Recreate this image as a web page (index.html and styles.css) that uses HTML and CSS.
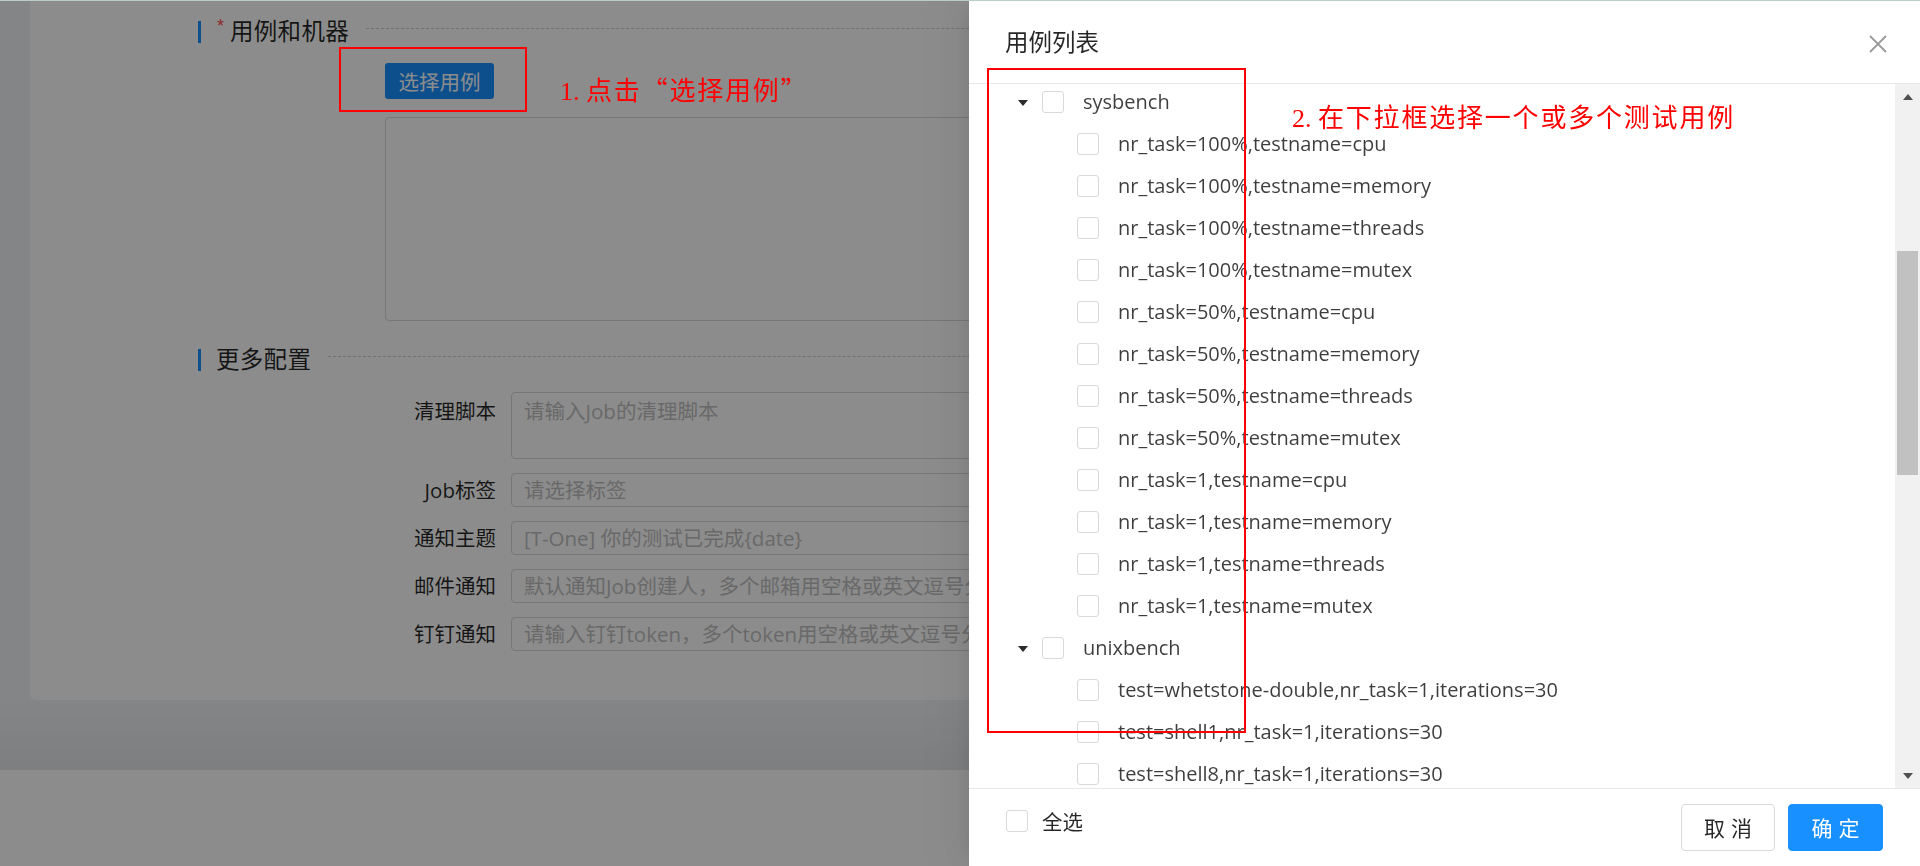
FILE: index.html
```html
<!DOCTYPE html>
<html lang="zh-CN">
<head>
<meta charset="utf-8">
<title>用例列表</title>
<link rel="stylesheet" href="styles.css">
</head>
<body>
<div class="layout">
  <div class="card">
    <section class="section">
      <div class="divider">
        <span class="bar"></span><span class="req">*</span><span class="sec-title">用例和机器</span><span class="dash"></span>
      </div>
      <div class="cases-body">
        <button class="btn-select">选择用例</button>
        <div class="case-box"></div>
      </div>
    </section>
    <section class="section section-more">
      <div class="divider">
        <span class="bar"></span><span class="sec-title sec-title-plain">更多配置</span><span class="dash"></span>
      </div>
      <div class="form">
        <div class="form-row form-row-area">
          <label class="form-label">清理脚本</label>
          <div class="textarea">请输入Job的清理脚本</div>
        </div>
        <div class="form-row">
          <label class="form-label">Job标签</label>
          <div class="input">请选择标签</div>
        </div>
        <div class="form-row">
          <label class="form-label">通知主题</label>
          <div class="input">[T-One] 你的测试已完成{date}</div>
        </div>
        <div class="form-row">
          <label class="form-label">邮件通知</label>
          <div class="input">默认通知Job创建人，多个邮箱用空格或英文逗号分隔</div>
        </div>
        <div class="form-row">
          <label class="form-label">钉钉通知</label>
          <div class="input">请输入钉钉token，多个token用空格或英文逗号分隔</div>
        </div>
      </div>
    </section>
  </div>
</div>

<div class="mask"></div>

<aside class="drawer">
  <header class="drawer-header">
    <h2 class="drawer-title">用例列表</h2>
    <span class="close">
      <svg width="18" height="18" viewBox="0 0 18 18"><path d="M1 1L17 17M17 1L1 17" stroke="#9a9a9a" stroke-width="1.8" fill="none"/></svg>
    </span>
  </header>
  <div class="drawer-body">
    <div class="tree">
      <div class="node parent"><span class="switcher"><i class="caret"></i></span><span class="checkbox"></span><span class="node-label">sysbench</span></div>
      <div class="children">
        <div class="node"><span class="checkbox"></span><span class="node-label">nr_task=100%,testname=cpu</span></div>
        <div class="node"><span class="checkbox"></span><span class="node-label">nr_task=100%,testname=memory</span></div>
        <div class="node"><span class="checkbox"></span><span class="node-label">nr_task=100%,testname=threads</span></div>
        <div class="node"><span class="checkbox"></span><span class="node-label">nr_task=100%,testname=mutex</span></div>
        <div class="node"><span class="checkbox"></span><span class="node-label">nr_task=50%,testname=cpu</span></div>
        <div class="node"><span class="checkbox"></span><span class="node-label">nr_task=50%,testname=memory</span></div>
        <div class="node"><span class="checkbox"></span><span class="node-label">nr_task=50%,testname=threads</span></div>
        <div class="node"><span class="checkbox"></span><span class="node-label">nr_task=50%,testname=mutex</span></div>
        <div class="node"><span class="checkbox"></span><span class="node-label">nr_task=1,testname=cpu</span></div>
        <div class="node"><span class="checkbox"></span><span class="node-label">nr_task=1,testname=memory</span></div>
        <div class="node"><span class="checkbox"></span><span class="node-label">nr_task=1,testname=threads</span></div>
        <div class="node"><span class="checkbox"></span><span class="node-label">nr_task=1,testname=mutex</span></div>
      </div>
      <div class="node parent"><span class="switcher"><i class="caret"></i></span><span class="checkbox"></span><span class="node-label">unixbench</span></div>
      <div class="children">
        <div class="node"><span class="checkbox"></span><span class="node-label">test=whetstone-double,nr_task=1,iterations=30</span></div>
        <div class="node"><span class="checkbox"></span><span class="node-label">test=shell1,nr_task=1,iterations=30</span></div>
        <div class="node"><span class="checkbox"></span><span class="node-label">test=shell8,nr_task=1,iterations=30</span></div>
      </div>
    </div>
    <div class="scrollbar">
      <div class="sb-btn"><i class="arrow-up"></i></div>
      <div class="sb-track"><div class="sb-thumb"></div></div>
      <div class="sb-btn"><i class="arrow-down"></i></div>
    </div>
  </div>
  <footer class="drawer-footer">
    <div class="check-all"><span class="checkbox"></span><span class="check-all-label">全选</span></div>
    <div class="actions">
      <button class="btn btn-cancel">取消</button>
      <button class="btn btn-ok">确定</button>
    </div>
  </footer>
</aside>

<div class="topline"></div>
<div class="anno anno-box1"></div>
<div class="anno anno-text anno-text1"><span class="num">1. </span>点击“选择用例”</div>
<div class="anno anno-box2"></div>
<div class="anno anno-text anno-text2"><span class="num">2. </span>在下拉框选择一个或多个测试用例</div>
</body>
</html>
```

FILE: styles.css
```css
* { box-sizing: border-box; margin: 0; padding: 0; }

html, body {
  width: 1920px;
  height: 866px;
  overflow: hidden;
}

body {
  background: #fff;
  font-family: "Open Sans", "Noto Sans CJK SC", sans-serif;
  color: rgba(0, 0, 0, 0.85);
}

/* ---------- background page ---------- */
.layout {
  height: 770px;
  padding: 0 30px;
  background: linear-gradient(to bottom, #f0f2f5 0, #f0f2f5 700px, #e5e7ea 770px);
}

.card {
  height: 700px;
  background: #fff;
  border-radius: 0 0 6px 6px;
  padding: 13px 0 0 168px;
}

.divider {
  display: flex;
  align-items: center;
  height: 34px;
}

.bar {
  width: 3px;
  height: 22px;
  background: #1890ff;
  margin-top: 4px;
}

.req {
  color: #ff4d4f;
  font-size: 18px;
  margin: -8px 6px 0 16px;
  font-family: "Liberation Sans", sans-serif;
}

.sec-title {
  font-family: "Noto Sans CJK SC", sans-serif;
  font-size: 23.5px;
  line-height: 34px;
  letter-spacing: 0.3px;
  color: rgba(0, 0, 0, 0.85);
}

.sec-title-plain { margin-left: 15px; }

.dash {
  flex: 1;
  border-top: 1px dashed #d0d0d0;
  margin: -4px 0 0 17px;
}

.cases-body {
  padding-left: 187px;
  padding-top: 16px;
}

.btn-select {
  display: block;
  width: 109px;
  height: 36px;
  border: none;
  border-radius: 3px;
  background: #1890ff;
  color: #fff;
  font-family: "Noto Sans CJK SC", sans-serif;
  font-size: 20.5px;
  line-height: 36px;
}

.case-box {
  margin-top: 18px;
  height: 204px;
  border: 1px solid #d9d9d9;
  border-radius: 4px;
}

.section-more { margin-top: 20px; }

.form { margin-top: 17px; }

.form-row {
  display: flex;
  margin-bottom: 14px;
}

.form-label {
  width: 313px;
  padding-right: 15px;
  text-align: right;
  font-size: 20.5px;
  line-height: 34px;
  color: rgba(0, 0, 0, 0.85);
}

.form-row-area .form-label {
  padding-top: 2px;
  line-height: 34px;
}

.input, .textarea {
  flex: 1;
  border: 1px solid #d9d9d9;
  border-radius: 4px;
  padding: 0 12px;
  font-size: 20.5px;
  color: #bfbfbf;
  white-space: nowrap;
  overflow: hidden;
}

.input {
  height: 34px;
  line-height: 32px;
}

.textarea {
  height: 67px;
  line-height: 30px;
  padding-top: 3px;
}

/* ---------- mask ---------- */
.mask {
  position: fixed;
  inset: 0;
  background: rgba(0, 0, 0, 0.45);
}

/* ---------- drawer ---------- */
.drawer {
  position: fixed;
  top: 0;
  right: 0;
  bottom: 0;
  width: 951px;
  background: #fff;
  display: flex;
  flex-direction: column;
  box-shadow: -6px 0 16px -8px rgba(0, 0, 0, 0.08), -9px 0 28px 0 rgba(0, 0, 0, 0.05), -12px 0 48px 16px rgba(0, 0, 0, 0.03);
}

.drawer-header {
  height: 84px;
  flex: none;
  border-bottom: 1px solid #e8e8e8;
  display: flex;
  align-items: center;
  justify-content: space-between;
  padding: 0 33px 0 36px;
}

.drawer-title {
  font-family: "Noto Sans CJK SC", sans-serif;
  font-weight: 400;
  font-size: 23.5px;
  line-height: 1;
  color: rgba(0, 0, 0, 0.85);
}

.close {
  display: block;
  width: 18px;
  height: 18px;
  margin-top: 5px;
}

.close svg { display: block; }

.drawer-body {
  flex: 1;
  display: flex;
  overflow: hidden;
}

.tree {
  flex: 1;
  padding-left: 49px;
  margin-top: -3px;
}

.node {
  display: flex;
  align-items: center;
  height: 42px;
}

.children .node { padding-left: 59px; }

.switcher {
  width: 24px;
  display: flex;
  align-items: center;
  padding-top: 2px;
}

.caret {
  display: block;
  width: 0;
  height: 0;
  border-left: 5.5px solid transparent;
  border-right: 5.5px solid transparent;
  border-top: 6px solid #2b2b2b;
}

.checkbox {
  display: block;
  flex: none;
  width: 22px;
  height: 22px;
  border: 1px solid #d9d9d9;
  border-radius: 3px;
  background: #fff;
}

.node-label {
  margin-left: 19px;
  font-size: 20px;
  line-height: 28px;
  color: rgba(0, 0, 0, 0.76);
  white-space: nowrap;
}

.scrollbar {
  width: 25px;
  flex: none;
  background: #f1f1f1;
  display: flex;
  flex-direction: column;
}

.sb-btn {
  height: 21px;
  display: flex;
  align-items: center;
  justify-content: center;
}

.arrow-up, .arrow-down {
  display: block;
  width: 0;
  height: 0;
  border-left: 5.5px solid transparent;
  border-right: 5.5px solid transparent;
}

.arrow-up { border-bottom: 6px solid #505050; margin-top: 4px; }
.arrow-down { border-top: 6px solid #505050; margin-top: -4px; }

.sb-track {
  flex: 1;
  padding: 0 2px;
}

.sb-thumb {
  margin-top: 146px;
  height: 224px;
  background: #c1c1c1;
}

.drawer-footer {
  height: 78px;
  flex: none;
  border-top: 1px solid #e8e8e8;
  display: flex;
  justify-content: space-between;
  align-items: center;
  padding: 0 37px;
}

.check-all {
  align-self: flex-start;
  margin-top: 20px;
  display: flex;
  align-items: center;
}

.check-all-label {
  margin-left: 14px;
  font-family: "Noto Sans CJK SC", sans-serif;
  font-size: 20.5px;
  line-height: 24px;
  color: rgba(0, 0, 0, 0.85);
}

.actions {
  display: flex;
  gap: 13px;
}

.btn {
  height: 47px;
  border-radius: 4px;
  font-family: "Noto Sans CJK SC", sans-serif;
  font-size: 21px;
  letter-spacing: 6px;
  padding-left: 6px;
  line-height: 45px;
}

.btn-cancel {
  width: 94px;
  background: #fff;
  border: 1px solid #d9d9d9;
  color: rgba(0, 0, 0, 0.85);
}

.btn-ok {
  width: 95px;
  background: #1890ff;
  border: 1px solid #1890ff;
  color: #fff;
}

/* ---------- window frame line & annotations ---------- */
.topline {
  position: fixed;
  top: 0;
  left: 0;
  right: 0;
  height: 1px;
  background: #b9ccc8;
}

.anno { position: absolute; }

.anno-box1 {
  left: 339px;
  top: 47px;
  width: 188px;
  height: 65px;
  border: 2px solid #ff0000;
}

.anno-box2 {
  left: 987px;
  top: 68px;
  width: 259px;
  height: 665px;
  border: 2px solid #ff0000;
}

.anno-text {
  font-family: "Noto Sans CJK SC", sans-serif;
  font-size: 26px;
  line-height: 26px;
  letter-spacing: 1.8px;
  color: #ff0000;
  white-space: nowrap;
}

.anno-text .num {
  font-family: "Liberation Serif", serif;
  letter-spacing: 0;
}

.anno-text1 { left: 560px; top: 76px; }
.anno-text2 { left: 1292px; top: 103px; }
```
